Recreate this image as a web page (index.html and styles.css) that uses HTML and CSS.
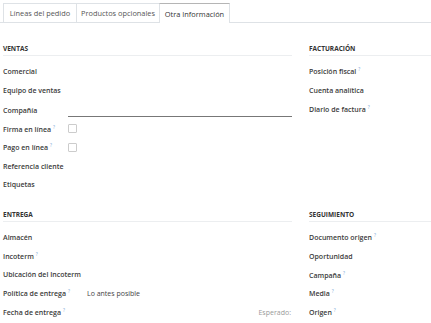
FILE: index.html
```html
<!DOCTYPE html>
<html lang="es">
<head>
    <meta charset="UTF-8">
    <meta name="viewport" content="width=device-width, initial-scale=1.0">
    <title>Otra Información</title>
    <link rel="stylesheet" href="styles.css">
</head>
<body>
    <!-- Pestañas -->
    <ul class="tabs">
        <li class="tab">Líneas del pedido</li>
        <li class="tab">Productos opcionales</li>
        <li class="tab activa">Otra Información</li>
    </ul>

    <!-- Grupos -->
    <div class="hoja">
        <div class="grupo">
            <div class="titulo">VENTAS</div>
            <div class="fila"><span class="etiqueta">Comercial</span><span class="valor"></span></div>
            <div class="fila alta"><span class="etiqueta">Equipo de ventas</span><span class="valor"></span></div>
            <div class="fila"><span class="etiqueta">Compañía</span><span class="valor"><span class="entrada"></span></span></div>
            <div class="fila"><span class="etiqueta">Firma en línea<sup>?</sup></span><span class="valor"><span class="caja"></span></span></div>
            <div class="fila"><span class="etiqueta">Pago en línea<sup>?</sup></span><span class="valor"><span class="caja"></span></span></div>
            <div class="fila"><span class="etiqueta">Referencia cliente</span><span class="valor"></span></div>
            <div class="fila"><span class="etiqueta">Etiquetas</span><span class="valor"></span></div>
        </div>
        <div class="grupo">
            <div class="titulo">FACTURACIÓN</div>
            <div class="fila"><span class="etiqueta">Posición fiscal<sup>?</sup></span><span class="valor"></span></div>
            <div class="fila"><span class="etiqueta">Cuenta analítica</span><span class="valor"></span></div>
            <div class="fila"><span class="etiqueta">Diario de factura<sup>?</sup></span><span class="valor"></span></div>
        </div>

        <div class="grupo">
            <div class="titulo">ENTREGA</div>
            <div class="fila"><span class="etiqueta">Almacén</span><span class="valor"></span></div>
            <div class="fila"><span class="etiqueta">Incoterm<sup>?</sup></span><span class="valor"></span></div>
            <div class="fila"><span class="etiqueta">Ubicación del Incoterm</span><span class="valor"></span></div>
            <div class="fila"><span class="etiqueta">Política de entrega<sup>?</sup></span><span class="valor texto">Lo antes posible</span></div>
            <div class="fila"><span class="etiqueta">Fecha de entrega<sup>?</sup></span><span class="valor esperado">Esperado:</span></div>
        </div>
        <div class="grupo">
            <div class="titulo">SEGUIMIENTO</div>
            <div class="fila"><span class="etiqueta">Documento origen<sup>?</sup></span><span class="valor"></span></div>
            <div class="fila"><span class="etiqueta">Oportunidad</span><span class="valor"></span></div>
            <div class="fila"><span class="etiqueta">Campaña<sup>?</sup></span><span class="valor"></span></div>
            <div class="fila"><span class="etiqueta">Media<sup>?</sup></span><span class="valor"></span></div>
            <div class="fila"><span class="etiqueta">Origen<sup>?</sup></span><span class="valor"></span></div>
        </div>
    </div>
</body>
</html>
```

FILE: styles.css
```css
body{ margin: 0; background: #fff; font-family: "Open Sans", "Noto Sans", sans-serif; font-size: 7px; color: #444; overflow: hidden;}
.tabs{ display: flex; margin: 0; padding: 3px 0 0 3px; list-style: none; border-bottom: 1px solid #dee2e6; height: 19px;}
.tab{ display: flex; align-items: center; justify-content: center; box-sizing: border-box; border: 1px solid #dee2e6; border-bottom: none; color: #555; margin-right: -1px; white-space: nowrap; font-size: 7.4px;}
.tab:nth-child(1){ width: 74px;}
.tab:nth-child(2){ width: 84px;}
.tab:nth-child(3){ width: 71px;}
.activa{ border-top-color: #b5b5b5; color: #333; background: #fff; height: 20px; margin-bottom: -1px;}
.hoja{ display: grid; grid-template-columns: 289px 1fr; column-gap: 17px; row-gap: 16px; padding: 21px 0 0 3px;}
.titulo{ font-weight: 700; color: #333; line-height: 10px; padding-bottom: 1px; border-bottom: 1px solid #eceef0; margin-bottom: 6px; font-size: 6.5px;}
.fila{ display: flex; align-items: center; height: 18.7px;}
.alta{ height: 20px;}
.etiqueta{ width: 65px; flex: none; font-weight: 600; color: #3b3b3b; white-space: nowrap;}
.valor{ flex: 1; display: flex; align-items: center;}
sup{ color: #7aa7d6; font-size: 4.5px; margin-left: 2px; font-weight: 400;}
.entrada{ flex: 1; border-bottom: 1px solid #777; height: 6px; margin-bottom: -7px;}
.caja{ width: 7px; height: 7px; border: 1px solid #ccc; border-radius: 1px;}
.texto{ padding-left: 19px;}
.esperado{ justify-content: flex-end; color: #999; padding-right: 1px;}
```
